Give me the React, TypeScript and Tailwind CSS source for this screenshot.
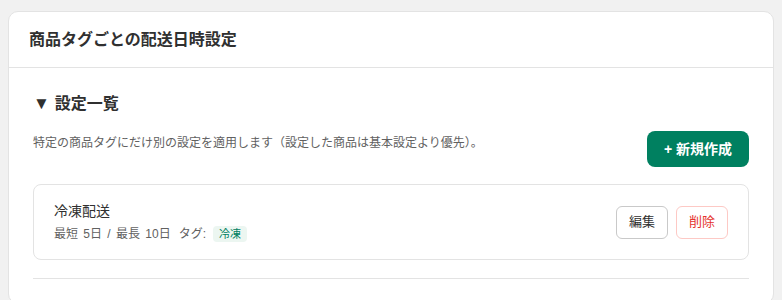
const FONT = { fontFamily: '"Liberation Sans", "Noto Sans CJK JP", sans-serif' };

export default function App() {
  return (
    <div className="min-h-[300px] bg-[#f1f1f1] px-2 pt-[11px]" style={FONT}>
      <section className="rounded-[10px] border border-[#e3e3e3] bg-white">
        <header className="flex h-[56px] items-center border-b border-[#e3e3e3] px-5">
          <h1 className="text-base font-bold text-[#303030]">商品タグごとの配送日時設定</h1>
        </header>

        <div className="px-6 pt-6 pb-6">
          <h2 className="flex items-center text-base font-bold leading-6 text-[#303030]">
            <span className="text-[17px]">▼</span>
            <span className="ml-[5px]">設定一覧</span>
          </h2>

          <div className="mt-[15px] flex items-start justify-between">
            <p className="mt-[3px] text-xs leading-[18px] text-[#616161]">
              特定の商品タグにだけ別の設定を適用します（設定した商品は基本設定より優先）。
            </p>
            <button className="h-9 w-[102px] rounded-lg bg-[#008060] text-sm font-bold text-white">
              + 新規作成
            </button>
          </div>

          <div className="mt-[17px] flex items-center justify-between rounded-lg border border-[#e3e3e3] px-5 py-4">
            <div>
              <div className="text-sm leading-5 text-[#303030]">冷凍配送</div>
              <div className="mt-1 flex items-center text-xs leading-[18px] text-[#616161]">
                <span className="[word-spacing:2px]">最短 5日 / 最長 10日</span>
                <span className="ml-[8px]">タグ:</span>
                <span className="ml-[7px] rounded bg-[#ecf6f1] px-[6px] text-[11px] leading-4 text-[#008060]">
                  冷凍
                </span>
              </div>
            </div>
            <div className="flex gap-2">
              <button className="h-[33px] w-[52px] rounded-md border border-[#c9c9c9] bg-white text-[13px] text-[#303030]">
                編集
              </button>
              <button className="h-[33px] w-[52px] rounded-md border border-[#fdc9c5] bg-white text-[13px] text-[#e5322d]">
                削除
              </button>
            </div>
          </div>

          <div className="mt-[18px] border-t border-[#e3e3e3]" />
        </div>
      </section>
    </div>
  );
}
